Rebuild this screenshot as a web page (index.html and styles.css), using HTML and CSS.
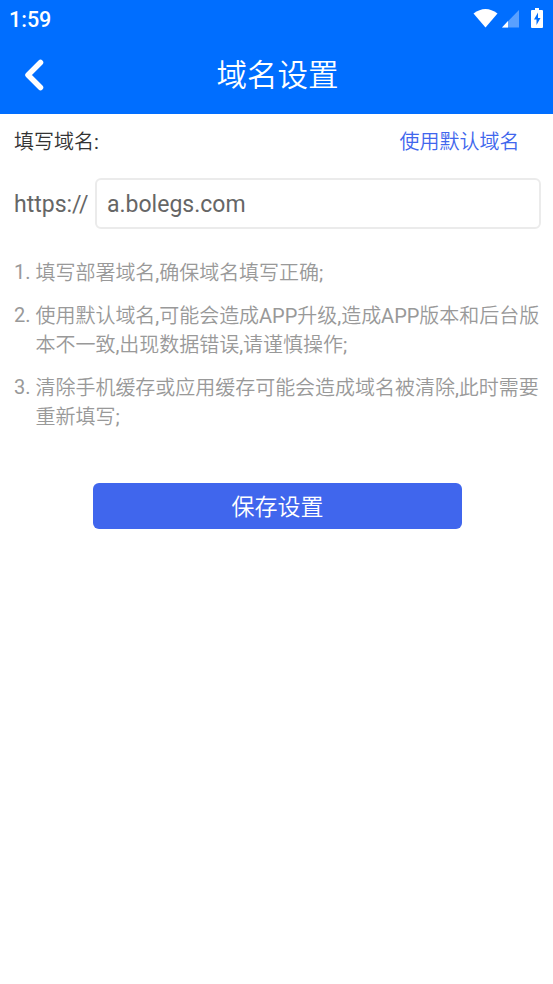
FILE: index.html
```html
<!DOCTYPE html>
<html lang="zh-CN">
<head>
<meta charset="utf-8">
<title>域名设置</title>
<link rel="stylesheet" href="styles.css">
</head>
<body>
<header class="header">
  <div class="status">
    <span class="time">1:59</span>
    <svg class="status-icons" width="72" height="22" viewBox="0 0 72 22">
      <path d="M1.500 5.500Q13.500-3.500 25.500 5.500L13.500 19.500Z" fill="#fff"/>
      <path d="M47 2V19.500H30Z" fill="#fff" fill-opacity=".35"/>
      <path d="M36 13V19.500H30Z" fill="#fff"/>
      <path d="M63 0H67V2H70Q71 2 71 3V19Q71 20 70 20H60Q59 20 59 19V3Q59 2 60 2H63Z" fill="#fff"/>
      <path d="M66 4.500L62 11.500H64.500V17L68.500 10H66Z" fill="#006eff"/>
    </svg>
  </div>
  <div class="nav">
    <svg class="back" width="22" height="34" viewBox="0 0 22 34"><path d="M17.500 4.500L5 17L17.500 29.500" fill="none" stroke="#fff" stroke-width="5.500" stroke-linecap="round" stroke-linejoin="round"/></svg>
    <h1 class="title">域名设置</h1>
  </div>
</header>
<main class="content">
  <div class="row">
    <span class="label">填写域名<i>:</i></span>
    <a class="default-link">使用默认域名</a>
  </div>
  <div class="field">
    <span class="scheme">https://</span>
    <div class="input">a.bolegs.com</div>
  </div>
  <ol class="notes">
    <li><span>1.</span><p>填写部署域名<i>,</i>确保域名填写正确<i>;</i></p></li>
    <li><span>2.</span><p>使用默认域名<i>,</i>可能会造成<i>APP</i>升级<i>,</i>造成<i>APP</i>版本和后台版<br>本不一致<i>,</i>出现数据错误<i>,</i>请谨慎操作<i>;</i></p></li>
    <li><span>3.</span><p>清除手机缓存或应用缓存可能会造成域名被清除<i>,</i>此时需要<br>重新填写<i>;</i></p></li>
  </ol>
  <button class="save">保存设置</button>
</main>
</body>
</html>
```
FILE: styles.css
```css
* { box-sizing: border-box; }
body { margin: 0; background: #fff; font-family: Roboto, "Noto Sans CJK SC", sans-serif; }
/* Latin runs keep the regular weight beside the lighter Chinese text */
i { font-style: normal; font-weight: 400; }
.header { height: 114px; background: #006eff; color: #fff; }
.status { height: 37px; padding: 8px 10px 0; display: flex; justify-content: space-between; align-items: flex-start; }
.time { font-size: 21.5px; line-height: 24px; font-weight: 500; margin-left: -1px; }
.status-icons { margin-right: -1px; }
.nav { height: 77px; display: grid; grid-template-columns: 61px 1fr 59px; align-items: center; }
.back { margin: -2px 0 0 23px; }
.title { margin: 0; font-size: 30.5px; line-height: 44px; font-weight: 350; text-align: center; }
.content { padding: 0 12px 0 14px; }
.row { height: 54px; display: flex; justify-content: space-between; align-items: center; padding: 0 21.5px 2px 0; font-size: 20px; font-weight: 350; color: #333; }
.default-link { color: #4066ed; }
.field { margin-top: 10px; height: 51px; display: flex; align-items: center; font-size: 23px; color: #666; }
.scheme { width: 81px; padding-top: 1px; }
.input { flex: 1; height: 51px; line-height: 49px; padding-left: 10px; border: 2px solid #ebebeb; border-radius: 6px; }
.notes { list-style: none; margin: 30px 0 0; padding: 0; font-size: 20px; line-height: 29px; color: #999; }
.notes li { display: flex; margin-bottom: 14px; white-space: nowrap; }
.notes span { width: 21.5px; margin-top: -1px; }
.notes p { margin: 0; font-weight: 350; letter-spacing: -.03px; }
.save { display: block; width: 369px; height: 46px; margin: 51px 0 0 79px; padding: 0 0 3px; border: 0; border-radius: 6px; background: #4066ed; color: #fff; font: 350 23px Roboto, "Noto Sans CJK SC", sans-serif; }
```
